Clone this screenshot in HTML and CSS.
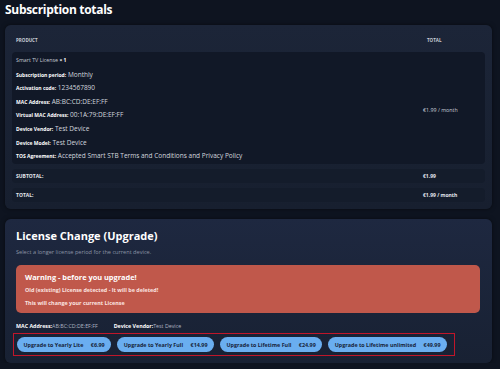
FILE: index.html
```html
<!DOCTYPE html>
<html lang="en">
<head>
    <meta charset="UTF-8">
    <meta name="viewport" content="width=device-width, initial-scale=1.0">
    <title>Subscription totals</title>
    <link rel="stylesheet" href="styles.css">
</head>
<body>
    <h1>Subscription totals</h1>

    <!-- Order summary -->
    <div class="panel totals">
        <div class="row head">
            <span>Product</span>
            <span>Total</span>
        </div>
        <div class="row item">
            <div class="details">
                <p class="product">Smart TV License <b>× 1</b></p>
                <p><b>Subscription period:</b> Monthly</p>
                <p><b>Activation code:</b> 1234567890</p>
                <p><b>MAC Address:</b> AB:BC:CD:DE:EF:FF</p>
                <p><b>Virtual MAC Address:</b> 00:1A:79:DE:EF:FF</p>
                <p><b>Device Vendor:</b> Test Device</p>
                <p><b>Device Model:</b> Test Device</p>
                <p><b>TOS Agreement:</b> Accepted Smart STB Terms and Conditions and Privacy Policy</p>
            </div>
            <span class="price">€1.99 / month</span>
        </div>
        <div class="row sum">
            <span>Subtotal:</span>
            <span>€1.99</span>
        </div>
        <div class="row sum">
            <span>Total:</span>
            <span>€1.99 / month</span>
        </div>
    </div>

    <!-- Upgrade -->
    <div class="panel upgrade">
        <h2>License Change (Upgrade)</h2>
        <p class="lead">Select a longer license period for the current device.</p>

        <div class="warning">
            <h3>Warning - before you upgrade!</h3>
            <p>Old (existing) License detected - It will be deleted!</p>
            <p>This will change your current License</p>
        </div>

        <div class="device">
            <span><b>MAC Address:</b>AB:BC:CD:DE:EF:FF</span>
            <span><b>Device Vendor:</b>Test Device</span>
        </div>

        <div class="options">
            <button class="button">Upgrade to Yearly Lite <span>€6.99</span></button>
            <button class="button">Upgrade to Yearly Full <span>€14.99</span></button>
            <button class="button">Upgrade to Lifetime Full <span>€24.99</span></button>
            <button class="button">Upgrade to Lifetime unlimited <span>€49.99</span></button>
        </div>
    </div>
</body>
</html>
```

FILE: styles.css
```css
/* General styles */
body {
    font-family: "Open Sans", "DejaVu Sans", sans-serif;
    background-color: #0e1420;
    color: #e6e9ef;
    margin: 0;
    padding: 0 8px 0 5px;
}

h1 {
    font-size: 12px;
    font-weight: 700;
    letter-spacing: -0.3px;
    color: #fff;
    margin: 0;
    padding: 1px 0 0 0;
    height: 24px;
}

.panel {
    background: linear-gradient(180deg, #1c2538, #171f2f);
    border-radius: 6px;
    box-shadow: 0 0 4px rgba(0, 0, 0, 0.5);
}

/* Totals table */
.totals {
    padding: 10px 7px 8px 7px;
    height: 166px;
}

.row {
    display: grid;
    grid-template-columns: 1fr 58px;
    align-items: center;
}

.head {
    font-size: 4.5px;
    font-weight: 700;
    text-transform: uppercase;
    color: #c9ced8;
    padding: 0 0 0 4px;
    height: 15px;
    align-items: start;
    margin-top: 2px;
}

.item {
    background-color: #111827;
    border-radius: 4px;
    padding: 2px 4px 4px 4px;
    height: 106px;
}

.details p {
    margin: 0;
    height: 13.6px;
    line-height: 13.6px;
    font-size: 6.5px;
    color: #d3d7df;
    white-space: nowrap;
}

.details b {
    font-size: 5px;
    font-weight: 700;
    color: #fff;
}

.details .product {
    font-size: 5.3px;
    color: #c4c9d3;
}

.price {
    font-size: 5.3px;
    color: #c9ced8;
    padding-top: 4px;
}

.sum {
    background-color: #141c2b;
    border-radius: 4px;
    margin-top: 5px;
    height: 14px;
    padding: 0 4px;
    font-size: 5px;
    font-weight: 700;
    text-transform: uppercase;
    color: #e4e7ee;
}

.sum span:last-child {
    text-transform: none;
}

/* Upgrade section */
.upgrade {
    margin-top: 10px;
    padding: 9px 12px 10px 11px;
    height: 125px;
    background: linear-gradient(180deg, #1e2840, #182133);
}

h2 {
    font-size: 11px;
    font-weight: 700;
    color: #fff;
    margin: 0;
    line-height: 16px;
}

.lead {
    font-size: 5.6px;
    color: #8c95a6;
    margin: 4px 0 9px 0;
}

.warning {
    background-color: #c0584b;
    border-radius: 5px;
    padding: 7px 9px 2px 9px;
    height: 39px;
}

.warning h3 {
    font-size: 7.4px;
    font-weight: 700;
    color: #fff;
    margin: 0 0 4px 0;
}

.warning p {
    font-size: 5.4px;
    font-weight: 700;
    color: #fbe4e0;
    margin: 0 0 5px 0;
}

.device {
    display: flex;
    gap: 16px;
    margin: 9px 0 3px 0;
    font-size: 5.3px;
    color: #aeb5c3;
}

.device b {
    color: #fff;
}

.options {
    display: flex;
    gap: 6px;
    border: 1px solid #c0162a;
    padding: 3px 3px;
    margin-left: -3px;
    width: 434px;
}

.button {
    background-color: #6aaef0;
    color: #17243a;
    border: none;
    border-radius: 8px;
    font-family: inherit;
    font-size: 5.4px;
    font-weight: 700;
    height: 15px;
    padding: 0 6.5px;
    white-space: nowrap;
}

.button span {
    margin-left: 6px;
}
```
